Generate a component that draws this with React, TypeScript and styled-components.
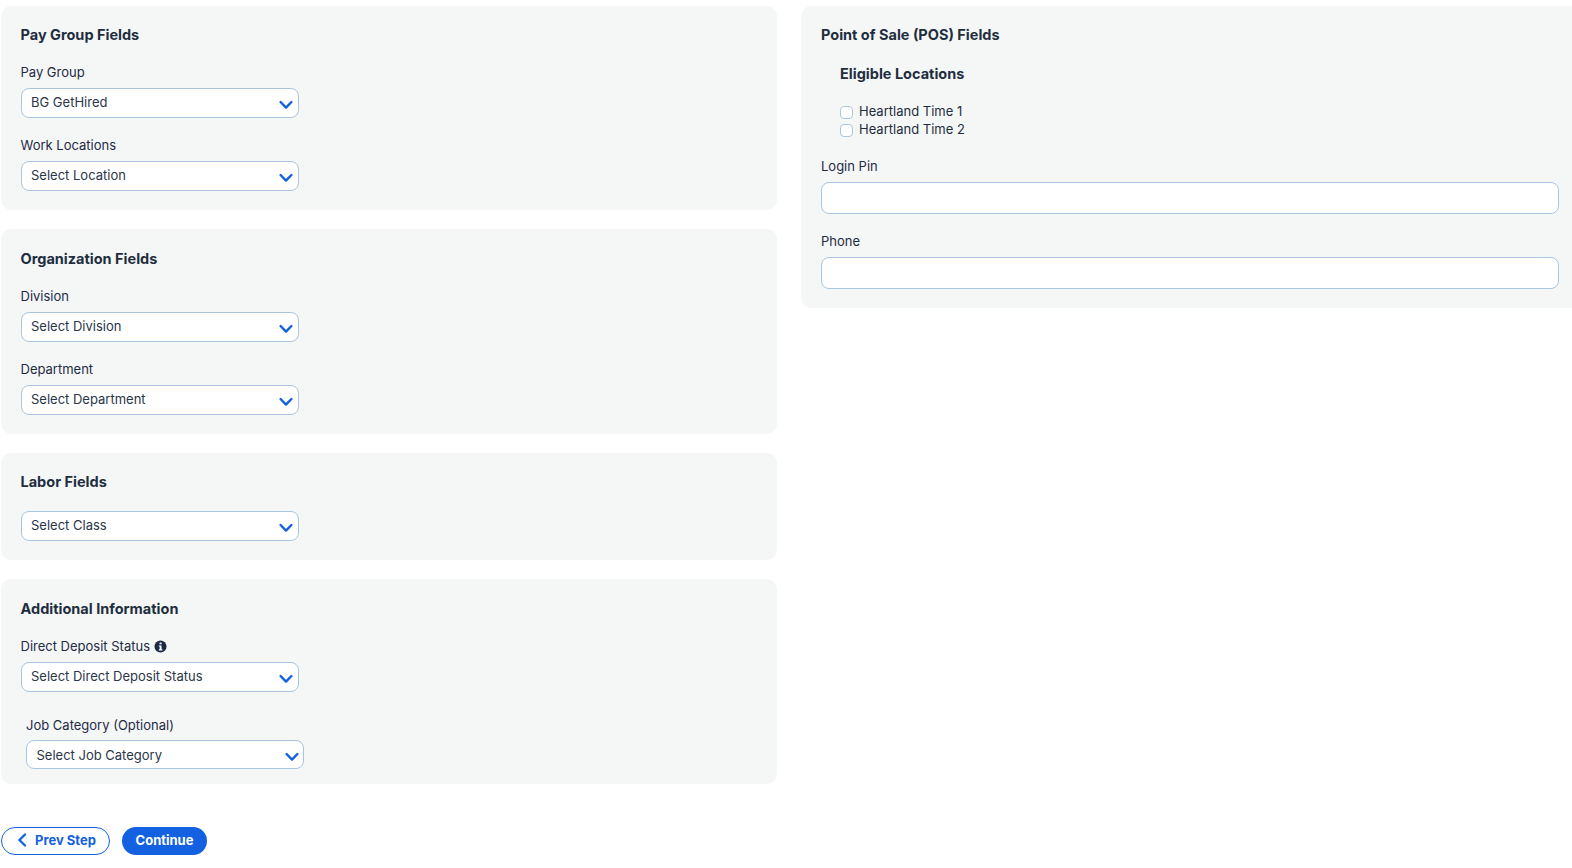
import React from "react";
import styled, {createGlobalStyle} from "styled-components";

const GlobalStyle = createGlobalStyle`
  html, body {
    margin: 0;
    padding: 0;
    background: #fff;
    font-family: Inter, "Liberation Sans", sans-serif;
    color: #1f2d3d;
    overflow: hidden;
  }
`;

const ChevronDown: React.FC<{ inset?: boolean }> = ({inset}) => (
    <SelectChevron $inset={inset} viewBox="0 0 14 10" fill="none">
        <path d="M1.6 2 L7 7.6 L12.4 2" stroke="#1361e0" strokeWidth="2.4" strokeLinecap="round" strokeLinejoin="round"/>
    </SelectChevron>
);

const Select: React.FC<{ label?: string; value: string; inset?: boolean; info?: boolean }> =
    ({label, value, inset, info}) => (
        <Field $inset={inset}>
            {label && (
                <FieldLabel $tight={inset}>
                    {label}
                    {info && (
                        <InfoIcon viewBox="0 0 14 14">
                            <circle cx="7" cy="7" r="6.5" fill="#1c2b45"/>
                            <rect x="5.9" y="2.6" width="2.3" height="2.1" rx="0.5" fill="#fff"/>
                            <path d="M5.2 5.8 H8.1 V9.9 H9 V11.2 H5.2 V9.9 H6.1 V7.1 H5.2 Z" fill="#fff"/>
                        </InfoIcon>
                    )}
                </FieldLabel>
            )}
            <SelectBox $inset={inset}>
                {value}
                <ChevronDown inset={inset}/>
            </SelectBox>
        </Field>
    );

const App: React.FC = () => (
    <>
        <GlobalStyle/>
        <Page>
            <LeftColumn>
                <Panel $height={204}>
                    <PanelTitle>Pay Group Fields</PanelTitle>
                    <Select label="Pay Group" value="BG GetHired"/>
                    <Select label="Work Locations" value="Select Location"/>
                </Panel>
                <Panel $height={204.5} $padTop={20.75}>
                    <PanelTitle>Organization Fields</PanelTitle>
                    <Select label="Division" value="Select Division"/>
                    <Select label="Department" value="Select Department"/>
                </Panel>
                <Panel $height={107}>
                    <PanelTitle>Labor Fields</PanelTitle>
                    <Select value="Select Class"/>
                </Panel>
                <Panel $height={204.75} $padTop={20.75}>
                    <PanelTitle>Additional Information</PanelTitle>
                    <Select label="Direct Deposit Status" value="Select Direct Deposit Status" info/>
                    <Select label="Job Category (Optional)" value="Select Job Category" inset/>
                </Panel>
                <Actions>
                    <PrevButton>
                        <svg width="10" height="14" viewBox="0 0 10 14" fill="none">
                            <path d="M8 1.5 L2.4 7 L8 12.5" stroke="#1361e0" strokeWidth="2.4" strokeLinecap="round" strokeLinejoin="round"/>
                        </svg>
                        Prev Step
                    </PrevButton>
                    <ContinueButton>Continue</ContinueButton>
                </Actions>
            </LeftColumn>
            <RightPanel>
                <PanelTitle>Point of Sale (POS) Fields</PanelTitle>
                <SubTitle>Eligible Locations</SubTitle>
                <CheckList>
                    <CheckRow><CheckBox/>Heartland Time 1</CheckRow>
                    <CheckRow><CheckBox/>Heartland Time 2</CheckRow>
                </CheckList>
                <InputField>
                    <FieldLabel>Login Pin</FieldLabel>
                    <TextBox/>
                </InputField>
                <InputField>
                    <FieldLabel>Phone</FieldLabel>
                    <TextBox/>
                </InputField>
            </RightPanel>
        </Page>
    </>
);

export default App;

const Page = styled.div`
  display: flex;
  align-items: flex-start;
  gap: 24px;
  width: 1572px;
  height: 868px;
  padding: 6px 0 0 1px;
  box-sizing: border-box;
`;

const LeftColumn = styled.div`
  display: flex;
  flex-direction: column;
  gap: 19.25px;
  width: 776px;
  flex: none;
`;

const Panel = styled.section<{ $height: number; $padTop?: number }>`
  height: ${({$height}) => $height}px;
  box-sizing: border-box;
  padding: ${({$padTop}) => $padTop ?? 20}px 19.5px 0;
  background: #f5f7f7;
  border-radius: 10px;
`;

const RightPanel = styled.section`
  flex: 1;
  height: 302px;
  box-sizing: border-box;
  padding: 20px 13px 0 20px;
  background: #f5f7f7;
  border-radius: 10px 0 0 10px;
`;

const PanelTitle = styled.h3`
  margin: 0 0 20px;
  font-size: 14.5px;
  line-height: 18px;
  font-weight: 700;
  color: #1e2e3e;
`;

const SubTitle = styled.h4`
  margin: 0 0 19px 19px;
  padding-top: 1px;
  font-size: 14.5px;
  line-height: 18px;
  font-weight: 700;
  color: #1e2e3e;
`;

const Field = styled.div<{ $inset?: boolean }>`
  margin: 0 0 19.75px ${({$inset}) => ($inset ? 5.5 : 0)}px;
  padding-top: ${({$inset}) => ($inset ? 6 : 0)}px;
`;

const FieldLabel = styled.label<{ $tight?: boolean }>`
  display: flex;
  align-items: center;
  gap: 4px;
  height: 16px;
  margin-bottom: ${({$tight}) => ($tight ? 6.5 : 8)}px;
  font-size: 13px;
  line-height: 16px;
  font-weight: 400;
  color: #1f2a44;
`;

const InfoIcon = styled.svg`
  width: 13px;
  height: 13px;
`;

const SelectBox = styled.div<{ $inset?: boolean }>`
  position: relative;
  display: flex;
  align-items: center;
  width: ${({$inset}) => ($inset ? 277.5 : 278.5)}px;
  height: 29.5px;
  box-sizing: border-box;
  padding: 0 9.5px ${({$inset}) => ($inset ? 0 : 1.5)}px;
  background: #fff;
  border: 1px solid #a9c6de;
  border-radius: 8px;
  font-size: 13px;
  color: #2a3648;
`;

const SelectChevron = styled.svg<{ $inset?: boolean }>`
  position: absolute;
  right: ${({$inset}) => ($inset ? 3.5 : 5)}px;
  top: 11px;
  width: 14px;
  height: 10px;
`;

const CheckList = styled.div`
  display: flex;
  flex-direction: column;
  margin: 0 0 20px 19px;
`;

const CheckRow = styled.label`
  display: flex;
  align-items: center;
  gap: 6px;
  height: 18px;
  font-size: 13px;
  color: #1f2d3d;
`;

const CheckBox = styled.span`
  width: 13px;
  height: 13px;
  box-sizing: border-box;
  margin-top: 2px;
  background: #fff;
  border: 1px solid #a9c6de;
  border-radius: 4px;
`;

const InputField = styled.div`
  margin-bottom: 18.5px;
`;

const TextBox = styled.div`
  height: 32px;
  box-sizing: border-box;
  background: #fff;
  border: 1px solid #a9c6de;
  border-radius: 8px;
`;

const Actions = styled.div`
  display: flex;
  gap: 12px;
  margin-top: 23.75px;
`;

const PrevButton = styled.button`
  display: flex;
  align-items: center;
  justify-content: center;
  gap: 8px;
  width: 109px;
  height: 28px;
  padding: 0 0 2px 2px;
  background: #fff;
  border: 1px solid #1361e0;
  border-radius: 14px;
  font-family: inherit;
  font-size: 13px;
  font-weight: 700;
  color: #1361e0;
`;

const ContinueButton = styled.button`
  width: 85px;
  height: 28px;
  padding: 0 0 2px;
  background: #1361e0;
  border: none;
  border-radius: 14px;
  font-family: inherit;
  font-size: 13px;
  font-weight: 700;
  color: #fff;
`;
